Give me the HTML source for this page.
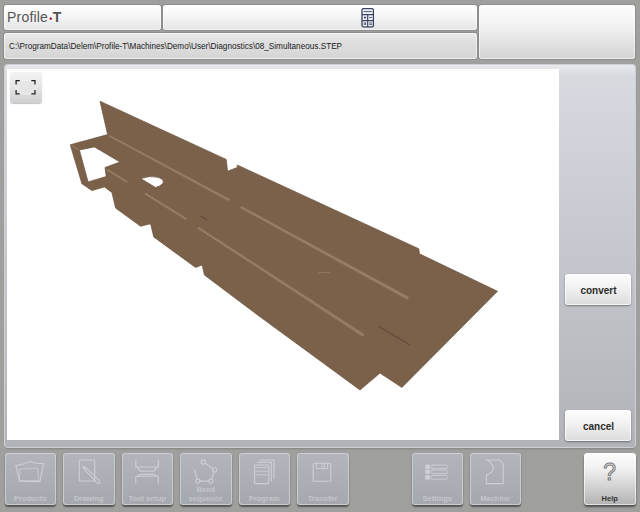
<!DOCTYPE html>
<html><head><meta charset="utf-8">
<style>
html,body{margin:0;padding:0;}
body{width:640px;height:512px;background:#9f9f9e;position:relative;overflow:hidden;font-family:"Liberation Sans",sans-serif;}
.p{position:absolute;border-radius:3px;background:linear-gradient(#ffffff,#f5f5f5 50%,#e3e3e3);box-shadow:0 0 0 1px rgba(115,115,115,.4),inset 0 0 0 1px rgba(255,255,255,.55);}
#logo{left:4px;top:5px;width:157px;height:25px;}
#logo span{position:absolute;left:3px;top:4px;font-size:14px;color:#555;letter-spacing:.2px;white-space:nowrap;}
#ctr{left:163px;top:5px;width:314px;height:25px;}
#path{left:4px;top:33px;width:473px;height:26px;background:linear-gradient(#eaeaea,#e0e0e0 30%,#d5d5d5);}
#path span{position:absolute;left:5px;top:8.5px;font-size:8.2px;color:#222;white-space:nowrap;}
#tr{left:479px;top:5px;width:156px;height:54px;background:linear-gradient(#fdfdfd,#efefef 45%,#d3d3d3);}
#main{left:5px;top:65px;width:630px;height:382px;background:linear-gradient(#e8e9ec,#d7dadf 3%,#d3d6dc 12%,#b1b3b9);border-radius:3px;box-shadow:0 0 0 1px rgba(215,215,220,.9),0 2px 2px rgba(0,0,0,.18);}
#cv{position:absolute;left:7px;top:69px;width:552px;height:371px;background:#fff;}
#fit{position:absolute;left:10px;top:72px;width:32px;height:31px;border-radius:3px;background:linear-gradient(#f4f4f4,#e4e4e4 50%,#cfcfcf);box-shadow:0 1px 1px rgba(0,0,0,.25);}
.b{position:absolute;border-radius:3.5px;background:linear-gradient(#fefefe,#efefef 50%,#dcdcdc);box-shadow:0 1px 2px rgba(0,0,0,.4),inset 0 0 0 1px rgba(255,255,255,.7);font-weight:bold;font-size:10px;color:#2c2c2c;text-align:center;}
.nb{position:absolute;top:453.2px;width:51.5px;height:51.8px;border-radius:3.5px;background:linear-gradient(#b3b5bc,#a6a8af);box-shadow:inset 0 0 0 1px rgba(205,207,212,.9),0 2px 1.5px rgba(0,0,0,.48);}
.nb span{position:absolute;left:0;right:0;bottom:1.6px;text-align:center;font-size:7.5px;line-height:8.6px;font-weight:bold;color:#c3c5cb;}
#help{background:linear-gradient(#fdfdfd,#f2f2f2 28%,#d2d2d2 65%,#b2b2b2);}
.q{position:absolute;left:0;right:0;top:6px;font-size:23px;line-height:26px;font-weight:normal;color:#e4e4e4;-webkit-text-stroke:1px #7c7c7c;}
</style></head><body>
<div class="p" id="logo"><span>Profile<b style="color:#a3122f;font-size:8.5px;position:relative;top:0px;margin:0 .6px 0 1.1px;letter-spacing:0">•</b><b>T</b></span></div>
<div class="p" id="ctr"></div>
<svg width="16" height="24" viewBox="0 0 16 24" style="position:absolute;left:360px;top:6px"><rect x="2" y="2.6" width="11.4" height="18.2" rx="1.4" fill="#f4f4f6" stroke="#3b4160" stroke-width="1.3"/><path d="M2,8.6H13.4 M2,14.6H13.4 M7.7,8.6V20.8" stroke="#3b4160" stroke-width="1.2" fill="none"/><path d="M3.6,5.6H11.8" stroke="#3b4160" stroke-width=".9"/><path d="M3.8,11.6H6.2 M5,10.4V12.8 M9.3,11.6H11.9 M4.2,16.4V19 M5.6,16.4V19 M9.3,17H11.9 M9.3,18.4H11.9" stroke="#3b4160" stroke-width=".9" fill="none"/></svg>
<div class="p" id="path"><span>C:\ProgramData\Delem\Profile-T\Machines\Demo\User\Diagnostics\08_Simultaneous.STEP</span></div>
<div class="p" id="tr"></div>
<div class="p" id="main"></div>
<div id="cv"></div>
<div id="fit"><svg width="32" height="31" viewBox="0 0 32 31"><rect x="6" y="8.5" width="19.5" height="13.5" fill="#e6e6e6" stroke="#f4f4f4" stroke-width=".8"/><path d="M9.8,8.6H6.1V12.4 M21.3,8.6H25V12.4 M6.1,18V21.8H9.8 M25,18V21.8H21.3" fill="none" stroke="#222" stroke-width="1.3"/></svg></div>
<svg id="mdl" width="640" height="512" viewBox="0 0 640 512" style="position:absolute;left:0;top:0">
<path fill="#7b6149" stroke="#6a523d" stroke-width=".7" stroke-linejoin="round" fill-rule="evenodd" d="M100,101.25 L226.25,159.4 L227.5,171.25 L237.25,167.5 L237.25,165 L418.75,248.75 L419.4,253.75 L497.5,291.25 L401.9,387.5 L380,373.1 L360,390 L256.25,314 L204.4,275 L202.2,265 L195.6,267.5 L153.75,237 L150.6,223.75 L140.6,226.25 L115.6,208.1 L111.9,192.5 L104.4,186.9 L91.9,190.6 L81.9,183.75 L70.25,144.75 L107.6,134.6 Z
M79.4,150 L94.4,146.9 L120,162 L105,167.5 L106.25,176.5 L88.1,181.9 Z
M140.7,178.6 Q150,175.2 158,177.3 Q165.5,180 162.5,183.8 Q160,186.5 155.6,187.5 Z"/>
<path fill="#876c53" d="M108.19,136.54 L229.26,201.88 A1.57,1.57 0 0 1 230.74,199.12 L109.31,134.46 A1.18,1.18 0 0 1 108.19,136.54 Z M239.43,208.11 L407.97,300.68 A2.15,2.15 0 0 1 410.03,296.92 L240.97,205.29 A1.60,1.60 0 0 1 239.43,208.11 Z M106.28,170.50 L127.15,183.55 A1.24,1.24 0 0 1 128.45,181.45 L107.52,168.50 A1.17,1.17 0 0 1 106.28,170.50 Z M143.72,194.20 L186.24,220.81 A1.43,1.43 0 0 1 187.76,218.39 L145.08,192.00 A1.29,1.29 0 0 1 143.72,194.20 Z M196.70,228.53 L363.41,337.68 A2.00,2.00 0 0 1 365.59,334.32 L198.30,226.07 A1.46,1.46 0 0 1 196.70,228.53 Z"/>
<path fill="#9a7f64" d="M108.47,136.02 L229.63,201.19 A0.78,0.78 0 0 1 230.37,199.81 L109.03,134.98 A0.59,0.59 0 0 1 108.47,136.02 Z M239.82,207.40 L408.49,299.74 A1.07,1.07 0 0 1 409.51,297.86 L240.58,206.00 A0.80,0.80 0 0 1 239.82,207.40 Z M106.59,170.00 L127.47,183.03 A0.62,0.62 0 0 1 128.13,181.97 L107.21,169.00 A0.59,0.59 0 0 1 106.59,170.00 Z M144.06,193.65 L186.62,220.21 A0.72,0.72 0 0 1 187.38,218.99 L144.74,192.55 A0.65,0.65 0 0 1 144.06,193.65 Z M197.10,227.91 L363.95,336.84 A1.00,1.00 0 0 1 365.05,335.16 L197.90,226.69 A0.73,0.73 0 0 1 197.10,227.91 Z"/>
<path d="M71.2,145.2 L79,150.2" stroke="#927860" stroke-width="1.3" fill="none"/>
<path d="M378.4,326.25 L409.7,344.7" stroke="#5c4432" stroke-width="1" fill="none"/>
<path d="M200.3,216.1 L207.3,220" stroke="#634b38" stroke-width="1.2" fill="none"/>
<path d="M318.9,274 V272.6 H329.4 V274" stroke="#9a8068" stroke-width=".8" fill="none"/>
</svg>
<div class="b" style="left:565px;top:274.2px;width:65.5px;height:31px;line-height:33px;text-indent:1.5px">convert</div>
<div class="b" style="left:565px;top:410.3px;width:65.5px;height:31px;line-height:33px;text-indent:1.5px">cancel</div>
<div class="nb" style="left:4.5px"><span>Products</span></div>
<div class="nb" style="left:63px"><span>Drawing</span></div>
<div class="nb" style="left:121.5px"><span>Tool setup</span></div>
<div class="nb" style="left:180px"><span>Bend<br>sequence</span></div>
<div class="nb" style="left:238.5px"><span>Program</span></div>
<div class="nb" style="left:297px"><span>Transfer</span></div>
<div class="nb" style="left:411.5px"><span>Settings</span></div>
<div class="nb" style="left:469.5px"><span>Machine</span></div>
<svg width="640" height="60" viewBox="0 452 640 60" style="position:absolute;left:0;top:452px" fill="none" stroke="#cdcfd5" stroke-width="1.1" stroke-linejoin="round" stroke-linecap="round">
<!-- products -->
<path d="M15.8,465.6 L24.5,463.8 L30,461.6 L36,463.2 L43.6,463.6 L40,481.6 L19.6,481.2 Z"/>
<path d="M20,469.2 L37.5,468 L38.8,480.5 L20,480.5 Z" stroke-width=".9" opacity=".8"/>
<!-- drawing -->
<rect x="79.3" y="460" width="15.4" height="21" rx="1"/>
<path transform="translate(0.3,1.8)" d="M83.2,466.8 L96.2,480.4 Q98.4,482.6 99.4,481 Q100,479.6 98,477.6 L85.2,465.6 Z M83.2,466.8 L82.6,464.4 L85.2,465.6"/>
<!-- tool setup -->
<path d="M135.8,460 V467 H158.4 V460 M137,467.4 L140.4,471.2 H153.8 L157.2,467.4 M140.4,474.4 H153.8 M135.8,483 V476.2 H158.4 V483 M137,476 L140.4,474.4 M157.2,476 L153.8,474.4"/>
<!-- bend sequence -->
<circle cx="203.4" cy="462" r="2.1"/><circle cx="214.6" cy="469.9" r="2.1"/><circle cx="210.9" cy="481.1" r="2.1"/><circle cx="197.8" cy="481.1" r="2.1"/>
<path d="M205.2,463.2 L212.8,468.6 M214,472 L211.6,479 M208.8,481.1 H199.9 M197.2,479 L194.6,470.4"/>
<!-- program -->
<rect x="254.6" y="465" width="14.2" height="18.6" rx="1"/>
<path d="M256,467.6 H267.4 M256,471.2 H267.4 M256,474.9 H267.4" stroke-width=".9"/>
<path d="M257.6,462.4 H271.4 V481 M260.2,460 H274 V478.6"/>
<!-- transfer -->
<rect x="313.2" y="463.2" width="17.6" height="18" rx="1"/>
<path d="M316.4,463.2 V468.6 H327.6 V463.2 M324.4,463.6 V468.2 M322.2,463.6 V468.2" stroke-width=".9"/>
<!-- settings -->
<g stroke-width=".9"><rect x="426" y="465" width="3.6" height="3.6" fill="#cdcfd5"/><rect x="426" y="470" width="3.6" height="3.6" fill="#cdcfd5"/><rect x="426" y="475.4" width="3.6" height="3.8" fill="#cdcfd5"/>
<rect x="431.2" y="465" width="16" height="3.6" rx="1.2"/><rect x="431.2" y="470" width="16" height="3.6" rx="1.2"/><rect x="431.2" y="475.4" width="16" height="3.8" rx="1.2"/></g>
<!-- machine -->
<path d="M486.4,460 H499.4 L503.2,463.6 V483.6 H486.4 V475 Q493.6,472.8 493.2,467.6 Q492.4,462.4 486.4,460 Z"/>
</svg>
<div class="b" id="help" style="box-shadow:0 2px 2px rgba(0,0,0,.5),inset 0 0 0 1px rgba(255,255,255,.6);left:584px;top:453.2px;width:51.5px;height:51.8px;"><span class="q">?</span><span style="position:absolute;left:0;right:0;bottom:1.6px;font-size:7.5px;line-height:8.6px;color:#333">Help</span></div>
</body></html>
